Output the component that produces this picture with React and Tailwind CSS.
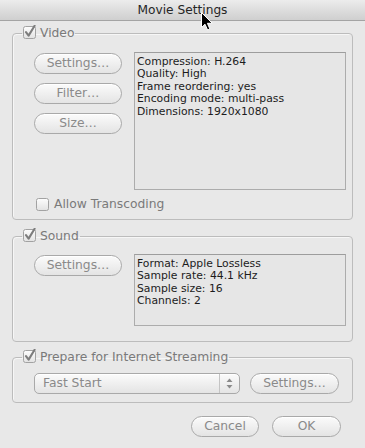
import React from "react";

const FONT = { fontFamily: '"DejaVu Sans", "Liberation Sans", sans-serif' };

function Check({ checked }) {
  return (
    <svg width="14" height="14" viewBox="0 0 14 14" className="block shrink-0">
      <defs>
        <linearGradient id="cbg" x1="0" y1="0" x2="0" y2="1">
          <stop offset="0" stopColor="#fdfdfd" />
          <stop offset="1" stopColor="#e2e2e2" />
        </linearGradient>
      </defs>
      <rect x="0.5" y="1.5" width="12" height="12" rx="2" fill="url(#cbg)" stroke="#a2a2a2" />
      {checked && (
        <path d="M3 7.2 L5.6 10.6 L11.6 0.8" fill="none" stroke="#7d7d7d" strokeWidth="2.1" strokeLinecap="round" strokeLinejoin="round" />
      )}
    </svg>
  );
}

function Legend({ label }) {
  return (
    <legend className="ml-[9px] px-[1px] h-[12px]">
      <span className="flex items-center gap-[3px] h-[12px] text-[12.3px] leading-[12px] text-[#7a7a7a]">
        <span className="-mt-[2px]">
          <Check checked />
        </span>
        {label}
      </span>
    </legend>
  );
}

function Btn({ children, className = "" }) {
  return (
    <div
      className={
        "h-[21px] rounded-full border border-[#a9a9a9] bg-gradient-to-b from-[#fbfbfb] to-[#e4e4e4] flex items-center justify-center text-[12.3px] text-[#8a8a8a] shadow-[inset_0_1px_0_#ffffff] " +
        className
      }
    >
      {children}
    </div>
  );
}

function InfoBox({ lines, className = "" }) {
  return (
    <div className={"border border-[#acacac] border-t-[#9d9d9d] bg-[#e6e6e6] pl-[2px] pt-[3px] text-[10.8px] leading-[12.4px] text-[#1c1c1c] " + className}>
      {lines.map((l) => (
        <div key={l}>{l}</div>
      ))}
    </div>
  );
}

export default function App() {
  return (
    <div className="w-[365px] h-[448px] bg-[#e8e8e8] relative overflow-hidden flex flex-col" style={FONT}>
      <div className="h-[21px] shrink-0 border-b border-[#a4a4a4] bg-gradient-to-b from-[#ececec] to-[#cfcfcf] flex items-center justify-center text-[12.2px] text-[#262626]">
        Movie Settings
      </div>

      <fieldset className="mx-[12px] mt-[6px] border border-[#bcbcbc] rounded-[4px] shadow-[inset_1px_1px_0_#f6f6f6]">
        <Legend label="Video" />
        <div className="flex pt-[13px] pl-[21px] pr-[5px]">
          <div className="w-[88px] mt-[1px] flex flex-col gap-[9px]">
            <Btn>Settings…</Btn>
            <Btn>Filter…</Btn>
            <Btn>Size…</Btn>
          </div>
          <InfoBox
            className="ml-[12px] w-[212px] h-[138px]"
            lines={["Compression: H.264", "Quality: High", "Frame reordering: yes", "Encoding mode: multi-pass", "Dimensions: 1920x1080"]}
          />
        </div>
        <div className="flex items-center h-[16px] mt-[6px] mb-[7px] ml-[23px] gap-[4px] text-[12.3px] text-[#7a7a7a]">
          <Check />
          <span>Allow Transcoding</span>
        </div>
      </fieldset>

      <fieldset className="mx-[12px] mt-[10px] border border-[#bcbcbc] rounded-[4px] shadow-[inset_1px_1px_0_#f6f6f6]">
        <Legend label="Sound" />
        <div className="flex pt-[12px] pl-[21px] pr-[5px] pb-[15px]">
          <div className="w-[88px] mt-[1px]">
            <Btn>Settings…</Btn>
          </div>
          <InfoBox
            className="ml-[12px] w-[212px] h-[72px]"
            lines={["Format: Apple Lossless", "Sample rate: 44.1 kHz", "Sample size: 16", "Channels: 2"]}
          />
        </div>
      </fieldset>

      <fieldset className="mx-[12px] mt-[9px] border border-[#bcbcbc] rounded-[4px] shadow-[inset_1px_1px_0_#f6f6f6]">
        <Legend label="Prepare for Internet Streaming" />
        <div className="flex items-center pt-[10px] pl-[21px] pb-[8px]">
          <div className="w-[206px] h-[21px] rounded-[5px] border border-[#a9a9a9] bg-gradient-to-b from-[#fbfbfb] to-[#e4e4e4] flex items-center text-[12.3px] text-[#8a8a8a] shadow-[inset_0_1px_0_#ffffff]">
            <span className="flex-1 pl-[8px]">Fast Start</span>
            <div className="w-[20px] h-full border-l border-[#c4c4c4] flex items-center justify-center">
              <svg width="7" height="11" viewBox="0 0 7 11">
                <path d="M3.5 0.5 L6.5 4 L0.5 4 Z" fill="#8a8a8a" />
                <path d="M3.5 10.5 L6.5 7 L0.5 7 Z" fill="#8a8a8a" />
              </svg>
            </div>
          </div>
          <Btn className="ml-[10px] w-[89px]">Settings…</Btn>
        </div>
      </fieldset>

      <div className="flex justify-end gap-[13px] pr-[24px] mt-[13px]">
        <Btn className="w-[68px] text-[#6f6f6f]">Cancel</Btn>
        <Btn className="w-[69px] text-[#6f6f6f]">OK</Btn>
      </div>

      <svg className="absolute left-[201px] top-[12px]" width="13" height="19" viewBox="0 0 13 19">
        <path d="M0.5 0.5 L0.5 15.5 L4 12.2 L6.6 18 L8.9 17 L6.4 11.3 L11.3 11.3 Z" fill="#000" stroke="#fff" strokeWidth="1" strokeLinejoin="round" />
      </svg>
    </div>
  );
}
